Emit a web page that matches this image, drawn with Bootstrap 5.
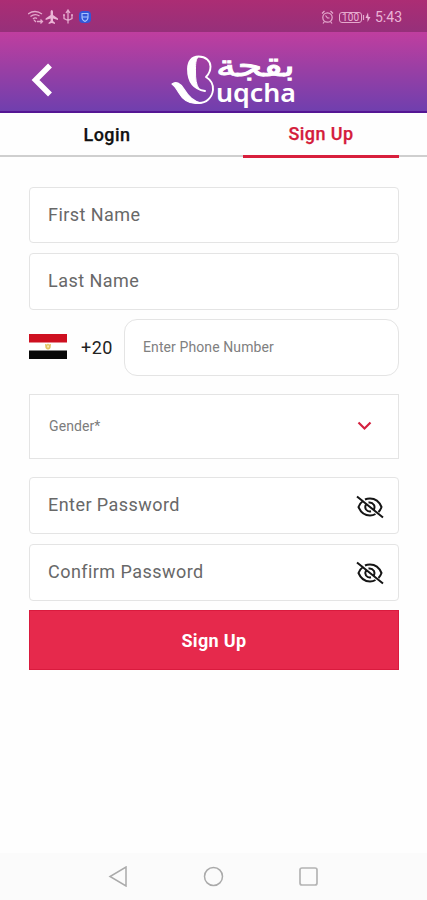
<!DOCTYPE html>
<html lang="en">
<head>
<meta charset="utf-8">
<meta name="viewport" content="width=device-width, initial-scale=1">
<title>Buqcha – Sign Up</title>
<link rel="stylesheet" href="https://cdn.jsdelivr.net/npm/bootstrap@5.3.0/dist/css/bootstrap.min.css">
<style>
  body { font-family: Roboto, "Noto Sans", sans-serif; color: #111; background: #fefefe; height: 900px; overflow: hidden; }
  .status-strip { height: 32px; background: linear-gradient(#ac2d74, #96307a); color: #ebb4d6; padding: 2px 25px 0 28px; font-size: 14px; }
  .brand-bar { height: 81px; background: linear-gradient(#c03e9f, #9b3fa4 45%, #703fae); border-bottom: 2px solid #551694; padding: 0 30px; }
  .back-btn { margin-top: 15px; line-height: 0; }
  .logo { margin: 12px 0 0 118px; }
  .auth-tabs { height: 45px; }
  .auth-tabs::before { content: ""; position: absolute; left: 0; right: 0; top: 42px; height: 2px; background: #cfcfcf; }
  .auth-tabs a { font-size: 18px; line-height: 20px; font-weight: 500; color: #111; text-decoration: none; letter-spacing: .45px; -webkit-text-stroke: .25px currentColor; }
  .tab-login { width: 156px; margin-left: 29px; padding-top: 12px; }
  .auth-tabs .tab-signup { width: 156px; margin-left: 58px; padding-top: 11px; color: #d41c3c; border-bottom: 3px solid #d81f3c; }
  .signup-form { padding: 29px 28px 0 29px; }
  .field { height: 57px; border: 1px solid #e4e4e4; border-radius: 4px; padding: 0 14px 2px 18px; font-size: 18px; color: #686868; letter-spacing: .45px; margin-bottom: 9.5px; background: #fff; }
  .field-first { height: 56px; }
  .field-phone { height: 57px; border-radius: 13px; font-size: 14px; letter-spacing: .1px; color: #808080; margin: 0; padding-bottom: 0; }
  .field-gender { height: 65px; border-radius: 0; font-size: 14px; letter-spacing: .1px; color: #7c7c7c; margin: 18px 0; padding: 0 26px 1px 19px; }
  .dial { width: 57px; padding-left: 14px; font-size: 18px; letter-spacing: .5px; color: #222; }
  .dial { margin-bottom: 1px; }
  .flag { margin-bottom: 2px; }
  .submit-btn { height: 60px; background: #e6294c; border: 1px solid #d91b3e; border-radius: 0; font-size: 18px; font-weight: 700; letter-spacing: .35px; }
  .submit-btn:hover { background: #d81f42; }
  .system-nav { height: 47px; background: #fbfbfb; gap: 74px; }
</style>
</head>
<body class="d-flex flex-column">
  <div class="status-strip d-flex align-items-center justify-content-between">
    <svg width="66" height="16" viewBox="0 0 66 16" fill="none" stroke="#e4a9cd" stroke-width="1.3">
      <path d="M0 5Q7 0 14 5M2.500 7.500Q7 4 11.500 7M5 10Q7 8 9 9.500M6 11l2 2M9 12.500h5M12.500 10.500l2 2-2 2"/>
      <path d="M23.800 1c.8 0 1.200 1.200 1.200 2v3l5 3.500V11l-5-1.500v2.500l2 1.700V15l-3.200-1-3.200 1v-1.300l2-1.700V9.500l-5 1.500V9.500l5-3.500V3c0-.8.400-2 1.200-2z" fill="#ebb4d6" stroke="none"/>
      <path d="M40 2v12.500M38 4l2-3 2 3M36 6v3.500l4 2M44 6v3.500l-4 2M35 6h2M43 6h2"/>
      <rect x="51" y="2" width="12" height="12" rx="4" fill="#3356d8" stroke="none"/>
      <path d="M54 4.500h6v4q0 2.500-3 4-3-1.500-3-4zM54 8h6" stroke="#a9c4ff" stroke-width="1.100"/>
    </svg>
    <div class="d-flex align-items-center">
      <svg width="50" height="15" viewBox="0 0 50 15" fill="none" stroke="#e4a9cd" stroke-width="1.200">
        <circle cx="6.500" cy="7.500" r="4.700"/><path d="M1 3.500L3.500 1M12 3.500L9.500 1M3.500 11.500L2 13.500M9.500 11.500l1.500 2M4.500 5.500l2 2.500h2"/>
        <rect x="18.500" y="2.500" width="22" height="10" rx="2.500" stroke-width="1"/><path d="M42.500 5v5"/>
        <text x="21" y="11.200" font-family="Roboto, sans-serif" font-size="10" textLength="17" fill="#ebb4d6" stroke="none">100</text>
        <path d="M47 2.500L44.500 8h2v4l3-5h-2z" fill="#ebb4d6" stroke="none"/>
      </svg>
      <span class="ms-1">5:43</span>
    </div>
  </div>

  <header class="brand-bar d-flex align-items-start">
    <a href="#" class="back-btn" aria-label="Back">
      <svg width="23" height="66" viewBox="0 0 23 66"><path d="M20 18.500L5.500 33l14.500 14.500" fill="none" stroke="#fff" stroke-width="5.500"/></svg>
    </a>
    <svg class="logo" width="126" height="66" viewBox="0 -8 126 66" role="img" aria-label="Buqcha">
      <g fill="none" stroke="#fff" stroke-linecap="round" stroke-linejoin="round">
        <path d="M34 39C22 37 17 29 17 17C17 9 21 4.500 27.500 4.500C35 4.500 39.500 9 39.500 14.500C39.500 20 37 23 35 25C40 28 42.500 32 42 38C41 46 35 51 28 51C20 51 14 46 9 39" stroke-width="1.900"/>
        <path d="M27 5C18 6 17 13 18 22C19 30 22 34 28 37C25 32 24.500 27 24.500 20C24.500 12 24.500 8 27 5z" fill="#fff" stroke-width="1"/>
        <path d="M1 32C5 29 9 31 13 37C18 45 22 49 30 51C19 53 12 48 8 41C5 36.500 4 34 1 32z" fill="#fff" stroke-width="1.200"/>
      </g>
      <text x="45" y="49.500" font-family="'Noto Sans', sans-serif" font-size="26" font-weight="600" textLength="80" lengthAdjust="spacingAndGlyphs" fill="#fff">uqcha</text>
      <text x="124" y="18.500" transform="scale(1 1.300)" direction="rtl" font-family="'DejaVu Sans', sans-serif" font-size="23" textLength="79" lengthAdjust="spacingAndGlyphs" fill="#fff" stroke="#fff" stroke-width=".7" lang="ar">بقجة</text>
    </svg>
  </header>

  <nav class="auth-tabs d-flex position-relative text-center">
    <a href="#" class="tab-login">Login</a>
    <a href="#" class="tab-signup position-relative" aria-current="page">Sign Up</a>
  </nav>

  <form class="signup-form flex-grow-1">
    <div class="field field-first d-flex align-items-center">First Name</div>
    <div class="field d-flex align-items-center">Last Name</div>
    <div class="d-flex align-items-center">
      <svg class="flag" width="38" height="25" viewBox="0 0 38 25" role="img" aria-label="Egypt">
        <path fill="#fff" d="M0 0h38v25H0z"/><path fill="#ce1020" d="M0 0h38v8.500H0z"/><path fill="#080808" d="M0 16.500h38V25H0z"/>
        <path d="M16 10l2 .5 1-1 1 1 2-.5-.5 4-1.500 1.500h-2l-1.500-1.500z" fill="#e3c463"/><path d="M18.300 11.500h1.500v2h-1.500z" fill="#fff4d0"/>
      </svg>
      <span class="dial">+20</span>
      <div class="field field-phone d-flex align-items-center flex-grow-1">Enter Phone Number</div>
    </div>
    <div class="field field-gender d-flex align-items-center justify-content-between">
      <span>Gender*</span>
      <svg width="16" height="10" viewBox="0 0 16 10"><path d="M2.500 1.500l6 6 6-6" fill="none" stroke="#d4213f" stroke-width="2.200"/></svg>
    </div>
    <div class="field d-flex align-items-center justify-content-between">
      <span>Enter Password</span>
      <svg class="mt-1" width="28" height="24" viewBox="0 0 28 24" fill="none" stroke="#151515" stroke-width="2">
        <path d="M7.500 5.500Q4 8 2.500 12Q6 20.500 14 20.500Q17 20.500 19.500 19M9 4.500Q11 3.500 14 3.500Q22 3.500 25.500 12Q24.500 15 22.500 17M10 9.500Q8.500 12 10 14.500Q12 17 15 16.200M12.500 7.600Q16 7 18 10Q19 12 18 14.500M1 1.500l26 21"/>
      </svg>
    </div>
    <div class="field d-flex align-items-center justify-content-between">
      <span>Confirm Password</span>
      <svg class="mt-1" width="28" height="24" viewBox="0 0 28 24" fill="none" stroke="#151515" stroke-width="2">
        <path d="M7.500 5.500Q4 8 2.500 12Q6 20.500 14 20.500Q17 20.500 19.500 19M9 4.500Q11 3.500 14 3.500Q22 3.500 25.500 12Q24.500 15 22.500 17M10 9.500Q8.500 12 10 14.500Q12 17 15 16.200M12.500 7.600Q16 7 18 10Q19 12 18 14.500M1 1.500l26 21"/>
      </svg>
    </div>
    <button type="button" class="submit-btn btn text-white w-100 p-0">Sign Up</button>
  </form>

  <footer class="system-nav d-flex align-items-center justify-content-center">
    <svg width="21" height="21" viewBox="0 0 21 21" fill="none" stroke="#aaa" stroke-width="1.500"><path d="M18 1v19L2 10.500z"/></svg>
    <svg width="21" height="21" viewBox="0 0 21 21" fill="none" stroke="#aaa" stroke-width="1.500"><circle cx="10.500" cy="10.500" r="9"/></svg>
    <svg width="21" height="21" viewBox="0 0 21 21" fill="none" stroke="#b4b4b4" stroke-width="1.700"><rect x="2" y="2" width="17" height="17" rx="2"/></svg>
  </footer>
<script src="https://cdn.jsdelivr.net/npm/bootstrap@5.3.0/dist/js/bootstrap.bundle.min.js"></script>
</body>
</html>
